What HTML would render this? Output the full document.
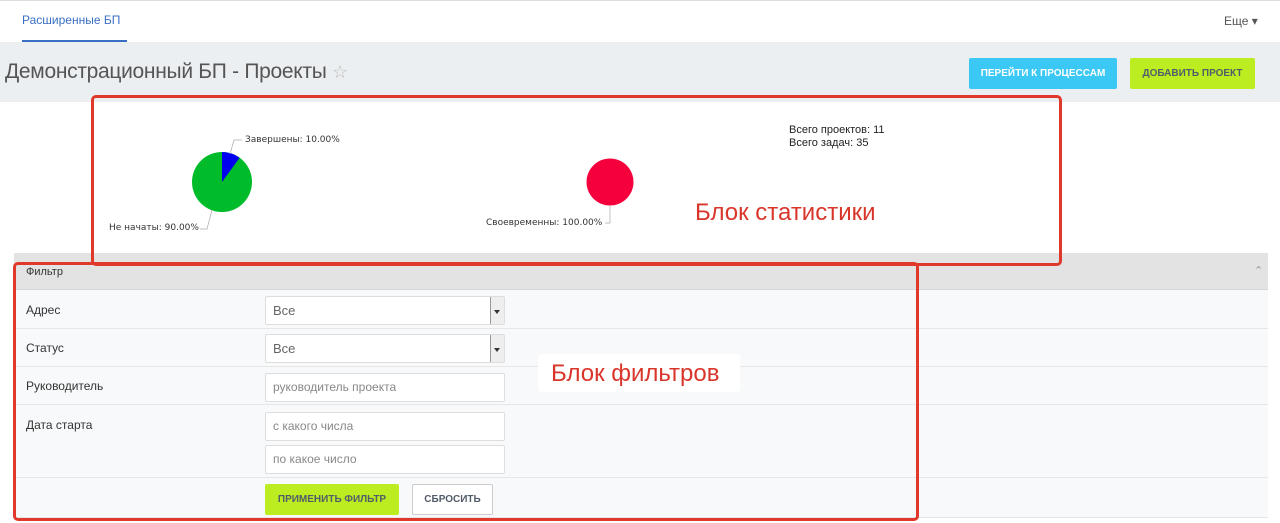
<!DOCTYPE html>
<html><head><meta charset="utf-8"><style>
*{box-sizing:border-box;margin:0;padding:0}
body{width:1280px;height:523px;overflow:hidden;background:#fff;font-family:"Liberation Sans",sans-serif;position:relative;color:#333}
.a{position:absolute}
.nav{left:0;top:0;width:1280px;height:42px;background:#fff;border-top:1px solid #ddd}
.band{left:0;top:42px;width:1280px;height:60px;background:#eceff1}
.btn{font-size:10px;font-weight:bold;text-align:center;line-height:31px;border-radius:2px}
.row{left:14px;width:1254px;background:#f8f9fa;border-bottom:1px solid #e6e6e6}
.lbl{font-size:12px;color:#333;left:26px}
.inp{left:265px;width:240px;height:29px;background:#fff;border:1px solid #ddd;border-radius:2px;font-size:12px;color:#888;padding-left:7px;line-height:27px}
.sel{color:#666;font-size:13px}
.sel:after{content:"";position:absolute;right:0;top:0;width:13px;height:27px;background:#eee;border-left:1px solid #999}
.arr{right:4px;top:13px;width:0;height:0;border-left:3px solid transparent;border-right:3px solid transparent;border-top:4px solid #333;z-index:2}
.red{border:3px solid #e0392b;border-radius:5px}
.pl{font-family:"DejaVu Sans",sans-serif;font-size:9px;color:#333}
</style></head><body>
<div class="a nav"></div>
<div class="a" style="left:22px;top:13px;font-size:12px;color:#3a6fc4">Расширенные БП</div>
<div class="a" style="left:22px;top:40px;width:105px;height:2px;background:#3a6fc4"></div>
<div class="a" style="left:1224px;top:14px;font-size:12px;color:#555">Еще ▾</div>
<div class="a band"></div>
<div class="a" style="left:5px;top:60px;font-size:21px;color:#555;letter-spacing:-0.3px">Демонстрационный БП - Проекты <span style="color:#bbb;font-size:18px">☆</span></div>
<div class="a btn" style="left:969px;top:58px;width:148px;height:31px;background:#3bc8f5;color:#fff">ПЕРЕЙТИ К ПРОЦЕССАМ</div>
<div class="a btn" style="left:1130px;top:58px;width:125px;height:31px;background:#bbed21;color:#535c69">ДОБАВИТЬ ПРОЕКТ</div>

<svg class="a" style="left:0;top:102px" width="1280" height="151">
<circle cx="222" cy="80" r="30" fill="#00bb2a"/>
<path d="M222 80 L222 50 A30 30 0 0 1 239.6 55.7 Z" fill="#0000ee"/>
<path d="M230 52 L234 38 L242 38" fill="none" stroke="#aaa" stroke-width="0.7"/>
<path d="M212 108 L207 127 L200 127" fill="none" stroke="#aaa" stroke-width="0.7"/>
<circle cx="610" cy="80" r="23.5" fill="#f5003d"/>
<path d="M610 104 L610 121 L605 121" fill="none" stroke="#aaa" stroke-width="0.7"/>
</svg>
<div class="a pl" style="left:245px;top:135px">Завершены: 10.00%</div>
<div class="a pl" style="left:109px;top:223px">Не начаты: 90.00%</div>
<div class="a pl" style="left:486px;top:218px">Своевременны: 100.00%</div>
<div class="a" style="left:789px;top:124px;font-size:11px;line-height:13px;color:#222">Всего проектов: 11<br>Всего задач: 35</div>
<div class="a" style="left:695px;top:199px;font-size:24px;color:#d9362b">Блок статистики</div>

<div class="a" style="left:14px;top:253px;width:1254px;height:37px;background:#e3e3e3;border-bottom:1px solid #d6d6d6"></div>
<div class="a" style="left:26px;top:266px;font-size:11px;color:#333">Фильтр</div>
<div class="a" style="left:1254px;top:264px;font-size:11px;color:#999">⌃</div>
<div class="a row" style="top:290px;height:39px"></div>
<div class="a row" style="top:329px;height:38px"></div>
<div class="a row" style="top:367px;height:38px"></div>
<div class="a row" style="top:405px;height:73px"></div>
<div class="a row" style="top:478px;height:40px"></div>
<div class="a lbl" style="top:303px">Адрес</div>
<div class="a lbl" style="top:341px">Статус</div>
<div class="a lbl" style="top:379px">Руководитель</div>
<div class="a lbl" style="top:418px">Дата старта</div>
<div class="a inp sel" style="top:296px">Все<div class="a arr"></div></div>
<div class="a inp sel" style="top:334px">Все<div class="a arr"></div></div>
<div class="a inp" style="top:373px">руководитель проекта</div>
<div class="a inp" style="top:412px">с какого числа</div>
<div class="a inp" style="top:445px">по какое число</div>
<div class="a btn" style="left:265px;top:484px;width:134px;height:31px;background:#bbed21;color:#535c69">ПРИМЕНИТЬ ФИЛЬТР</div>
<div class="a btn" style="left:412px;top:484px;width:81px;height:31px;background:#fff;border:1px solid #ccc;color:#535c69;line-height:29px">СБРОСИТЬ</div>
<div class="a" style="left:538px;top:354px;width:202px;height:38px;background:#fff;border-radius:4px"></div>
<div class="a" style="left:551px;top:360px;font-size:24px;color:#d9362b">Блок фильтров</div>

<div class="a red" style="left:91px;top:95px;width:971px;height:171px"></div>
<div class="a red" style="left:13px;top:262px;width:906px;height:259px"></div>
</body></html>
